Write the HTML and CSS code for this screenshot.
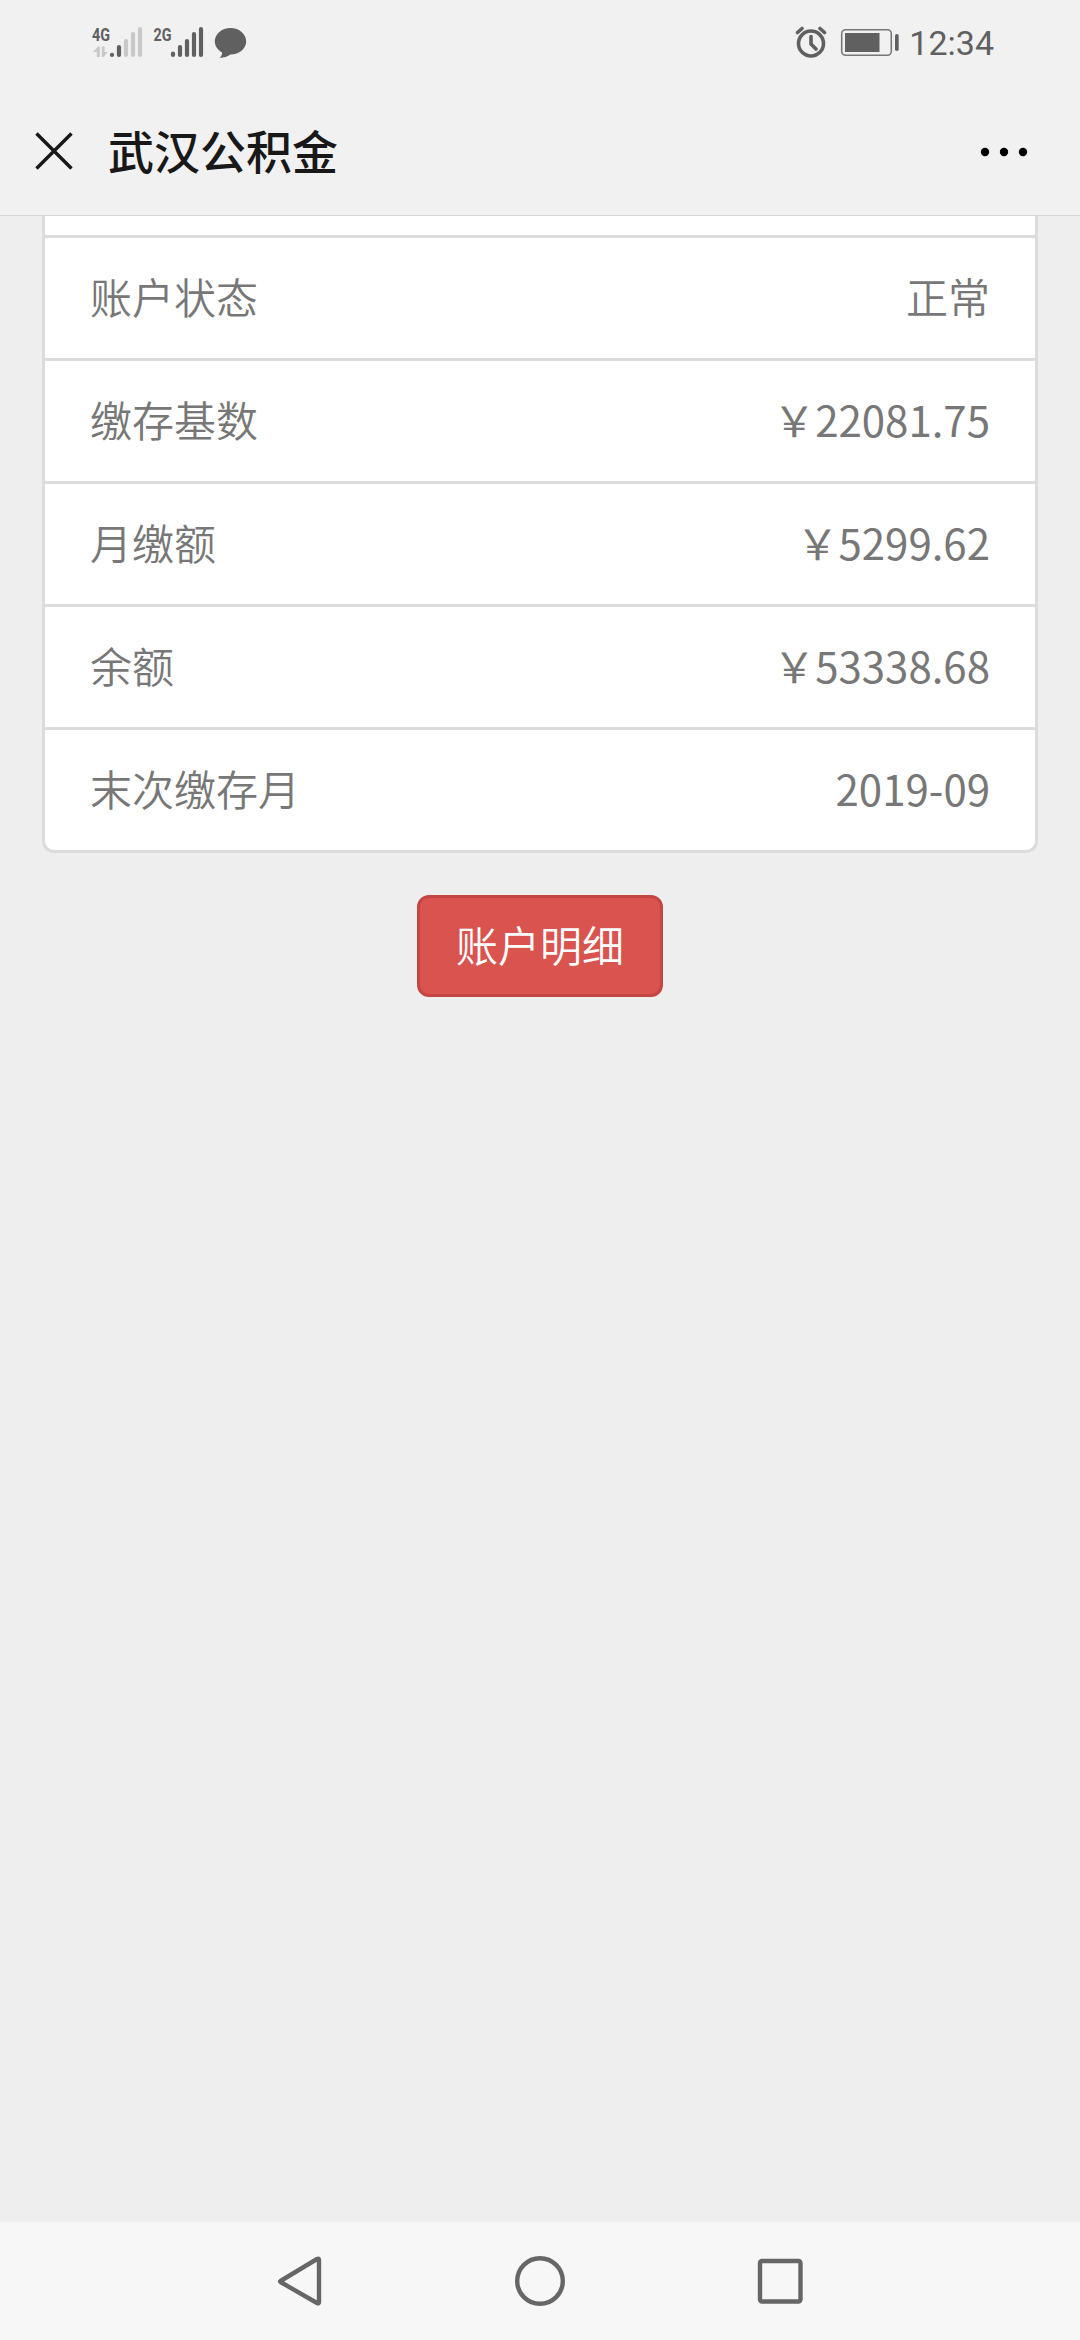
FILE: index.html
```html
<!DOCTYPE html>
<html lang="zh-CN">
<head>
<meta charset="utf-8">
<title>武汉公积金</title>
<link rel="stylesheet" href="styles.css">
</head>
<body>
<div class="screen">
  <div class="status-bar">
    <svg class="status-left" width="160" height="44" viewBox="90 20 160 44">
      <g class="network-label">
        <text x="92" y="40.5" textLength="18" lengthAdjust="spacingAndGlyphs">4G</text>
        <text x="153.5" y="40.5" textLength="18" lengthAdjust="spacingAndGlyphs">2G</text>
      </g>
      <g class="bars">
        <path d="M112 54.8v.2M119 47v8"/>
        <path class="faint" d="M126 41v14M133 34v21M140 29v26"/>
        <path d="M173 53.5v1.5M180 47v8M187 41v14M194 34v21M201 29v26"/>
      </g>
      <path class="data-arrows" d="M92.500 52.500l5.500-6h1.800v10.500h-3v-5.500zM101.800 46.500h2.800v5.500h3.200l-4.500 5h-1.500z"/>
      <path class="fill" d="M230.500 28c8.700 0 15.700 6 15.700 13.300s-7 13.300-15.700 13.300c-2.700 2-6.500 3.200-11 3.400 1.900-1.700 2.700-3.600 2.600-5.500-4.400-2.400-7.300-6.500-7.300-11.200C214.800 34 221.800 28 230.500 28z"/>
    </svg>
    <div class="status-right">
      <svg width="104" height="44" viewBox="795 20 104 44">
        <g class="clock">
          <circle cx="811" cy="43.500" r="12.500"/>
          <path d="M811 36.500v7.500l5 5M797.500 32.500l4.500-4M824.500 32.500l-4.500-4"/>
        </g>
        <rect class="battery" x="841.700" y="29.700" width="49.600" height="25.600" rx="4"/>
        <rect class="fill" x="845" y="33" width="34.500" height="19"/>
        <rect class="fill" x="895" y="34" width="3.700" height="17" rx="1.800"/>
      </svg>
      <span class="time">12:34</span>
    </div>
  </div>
  <header class="title-bar">
    <svg class="close" width="38" height="38" viewBox="0 0 38 38"><path d="M1.500 1.500l35 35M36.500 1.500l-35 35"/></svg>
    <h1 class="title">武汉公积金</h1>
    <svg class="more" width="48" height="10" viewBox="0 0 48 10"><circle cx="5" cy="5" r="4.200"/><circle cx="24" cy="5" r="4.200"/><circle cx="43" cy="5" r="4.200"/></svg>
  </header>
  <main class="content">
    <div class="card">
      <div class="row-end"></div>
      <div class="row"><span>账户状态</span><span>正常</span></div>
      <div class="row"><span>缴存基数</span><span class="number">￥22081.75</span></div>
      <div class="row"><span>月缴额</span><span class="number">￥5299.62</span></div>
      <div class="row"><span>余额</span><span class="number">￥53338.68</span></div>
      <div class="row"><span>末次缴存月</span><span class="number">2019-09</span></div>
    </div>
    <button class="detail-button">账户明细</button>
  </main>
  <nav class="nav-bar">
    <svg width="560" height="60" viewBox="260 2250 560 60">
      <path d="M280.500 2281L317 2259q2-1 2 1v42q0 2-2 1L280.500 2282q-.8-.5 0-1z"/>
      <circle cx="540" cy="2281" r="22.800"/>
      <rect x="760" y="2261" width="40.500" height="40.500" rx="2"/>
    </svg>
  </nav>
</div>
</body>
</html>
```
FILE: styles.css
```css
* {
  box-sizing: border-box;
}

body {
  margin: 0;
  font-family: "Noto Sans CJK SC", sans-serif;
  background: #eee;
}

.screen {
  display: flex;
  flex-direction: column;
  width: 1080px;
  height: 2340px;
}

.status-bar {
  display: flex;
  justify-content: space-between;
  height: 86px;
  padding: 20px 86px 0 90px;
  background: #f1f1f1;
}

.status-right {
  display: flex;
  gap: 10px;
}

.time {
  font: 34px/46px Roboto, sans-serif;
  color: #606060;
}

.network-label {
  font: bold 19px Roboto, sans-serif;
  fill: #606060;
}

.bars path {
  fill: none;
  stroke: #606060;
  stroke-width: 4.2;
  stroke-linecap: round;
}

.bars .faint {
  stroke: #c8c8c8;
}

.data-arrows {
  fill: #c8c8c8;
}

.fill {
  fill: #606060;
}

.clock {
  fill: none;
  stroke: #606060;
  stroke-width: 3.6;
  stroke-linecap: round;
}

.battery {
  fill: none;
  stroke: #777;
  stroke-width: 1.6;
}

.title-bar {
  display: flex;
  align-items: center;
  height: 130px;
  padding: 0 52px 0 35px;
  border-bottom: 1px solid #d5d5d5;
  background: #f1f1f1;
}

.close {
  fill: none;
  stroke: #181818;
  stroke-width: 3.4;
}

.title {
  flex: 1;
  margin: 0 0 4px 35px;
  font-size: 46px;
  font-weight: 500;
  line-height: 60px;
  color: #181818;
}

.more {
  margin-top: 2px;
  fill: #000;
}

.content {
  display: flex;
  flex: 1;
  flex-direction: column;
  align-items: center;
}

.card {
  width: 996px;
  border: 3px solid #dcdcdc;
  border-top: 0;
  border-radius: 0 0 12px 12px;
  background: #fff;
}

.row-end {
  height: 19px;
}

.row {
  display: flex;
  justify-content: space-between;
  height: 123px;
  padding: 0 45px;
  border-top: 3px solid #dcdcdc;
  font-size: 42px;
  font-weight: 350;
  line-height: 115px;
  color: #777;
}

.number {
  font-weight: 400;
}

.detail-button {
  width: 246px;
  height: 102px;
  margin-top: 42px;
  padding: 0 0 4px;
  border: 3px solid #c44643;
  border-radius: 12px;
  font-family: inherit;
  font-size: 42px;
  font-weight: 350;
  line-height: 60px;
  color: #fff;
  background: #d9534f;
}

.nav-bar {
  display: flex;
  justify-content: center;
  height: 118px;
  padding-top: 28px;
  background: #f7f7f7;
}

.nav-bar svg {
  fill: none;
  stroke: #666;
  stroke-width: 4.400;
}
```
